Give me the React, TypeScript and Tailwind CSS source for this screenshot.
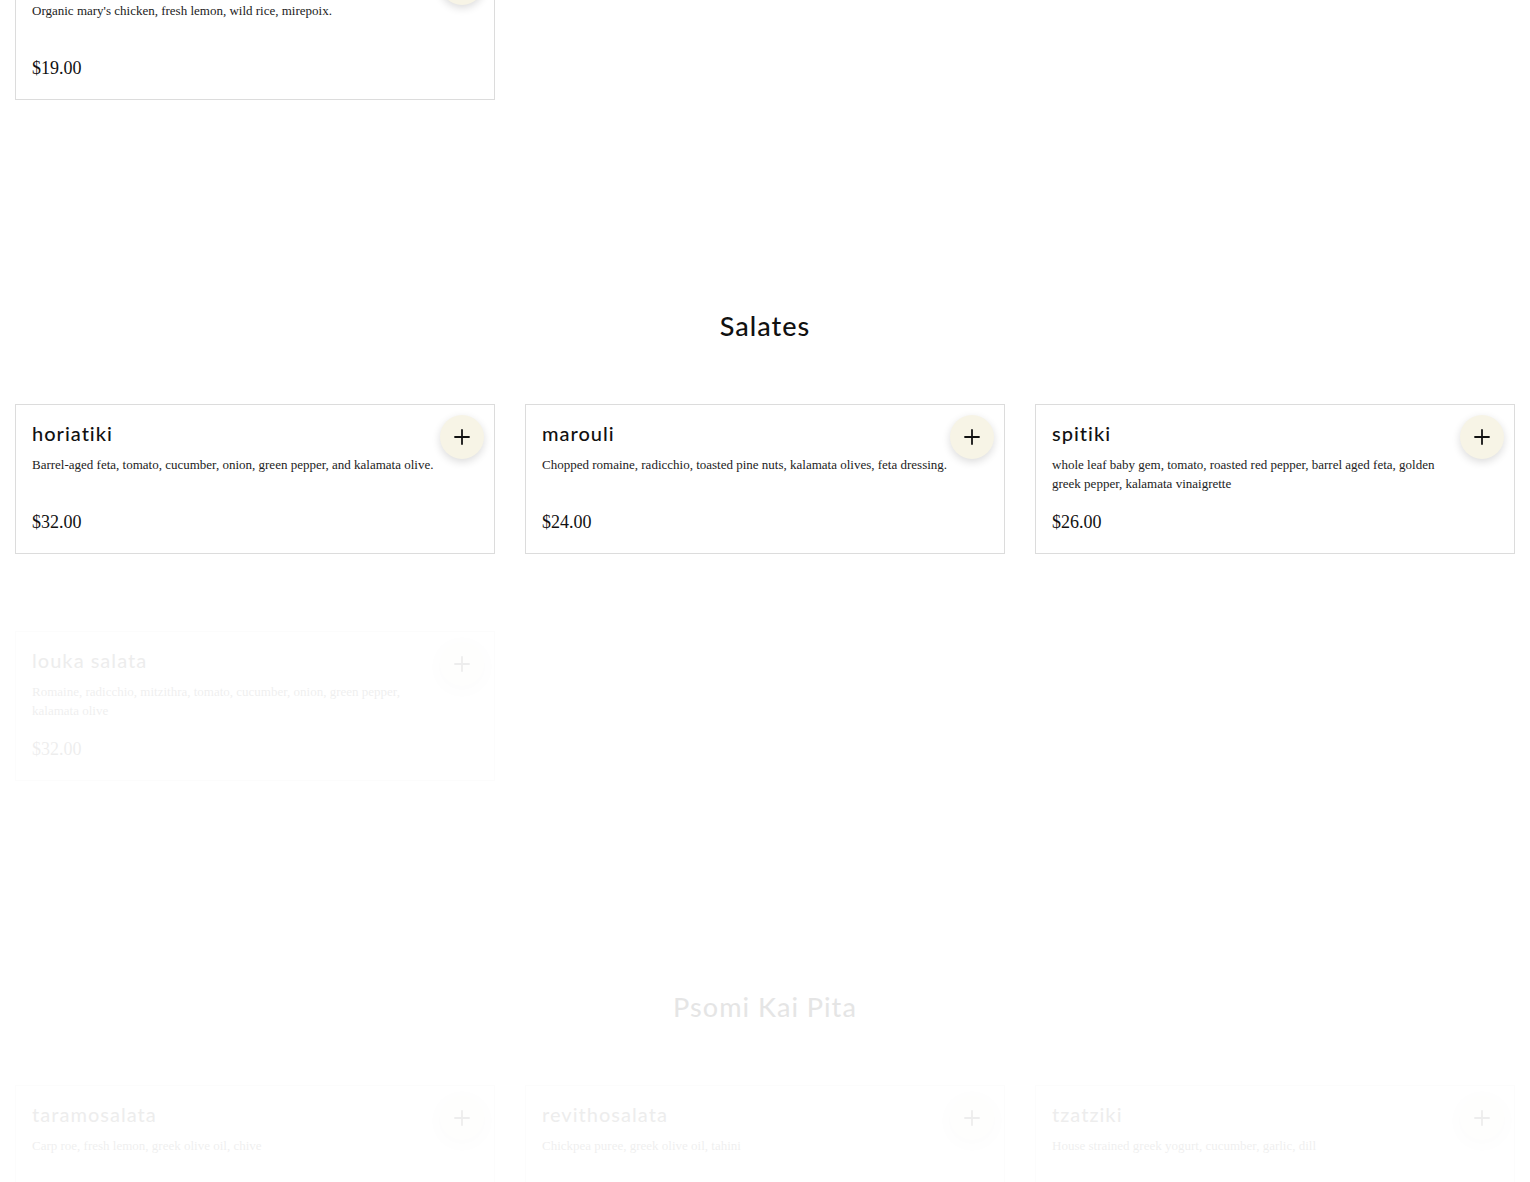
import { Plus } from 'lucide-react'

interface MenuItem {
  name: string
  description: string
  price: string
}

const mains: MenuItem[] = [
  { name: 'kotopoulo', description: "Organic mary's chicken, fresh lemon, wild rice, mirepoix.", price: '$19.00' },
]

// line breaks follow the original wrapping
const salates: MenuItem[] = [
  { name: 'horiatiki', description: 'Barrel-aged feta, tomato, cucumber, onion, green pepper, and kalamata olive.', price: '$32.00' },
  { name: 'marouli', description: 'Chopped romaine, radicchio, toasted pine nuts, kalamata olives, feta dressing.', price: '$24.00' },
  { name: 'spitiki', description: 'whole leaf baby gem, tomato, roasted red pepper, barrel aged feta, golden\ngreek pepper, kalamata vinaigrette', price: '$26.00' },
  { name: 'louka salata', description: 'Romaine, radicchio, mitzithra, tomato, cucumber, onion, green pepper,\nkalamata olive', price: '$32.00' },
]

const psomi: MenuItem[] = [
  { name: 'taramosalata', description: 'Carp roe, fresh lemon, greek olive oil, chive', price: '$14.00' },
  { name: 'revithosalata', description: 'Chickpea puree, greek olive oil, tahini', price: '$12.00' },
  { name: 'tzatziki', description: 'House strained greek yogurt, cucumber, garlic, dill', price: '$12.00' },
]

function MenuCard({ item, faded }: { item: MenuItem; faded?: boolean }) {
  return (
    <div
      className={
        'relative flex h-[150px] flex-col border border-[#dcdcdc] bg-white px-4 pt-[14px] pb-[19px] ' +
        (faded ? 'opacity-[0.07]' : '')
      }
    >
      <h3 className="font-['Lato',sans-serif] text-[20px] font-medium leading-[28px] tracking-[1px] text-[#111]">
        {item.name}
      </h3>
      <p className="mt-[8px] max-w-[420px] whitespace-pre-line font-['Liberation_Serif',serif] text-[13px] leading-[19px] text-[#222]">
        {item.description}
      </p>
      <span className="mt-auto font-['Liberation_Serif',serif] text-[18px] leading-[24px] text-[#111]">
        {item.price}
      </span>
      <button className="absolute top-[10px] right-[10px] flex h-11 w-11 items-center justify-center rounded-full bg-[#f7f4e6] shadow-[0_3px_8px_rgba(0,0,0,0.14)]">
        <Plus size={24} strokeWidth={1.8} className="text-[#111]" />
      </button>
    </div>
  )
}

function SectionTitle({ title, faded }: { title: string; faded?: boolean }) {
  return (
    <h2
      className={
        "mt-[206px] mb-[58px] text-center font-['Lato',sans-serif] text-[27px] font-medium leading-[40px] tracking-[1px] text-[#111] " +
        (faded ? 'opacity-[0.1]' : '')
      }
    >
      {title}
    </h2>
  )
}

export default function App() {
  return (
    <div className="min-h-screen overflow-hidden bg-white">
      <div className="-mt-[50px] px-[15px] pb-10">
        <div className="grid grid-cols-3 gap-x-[30px]">
          {mains.map((item) => (
            <MenuCard key={item.name} item={item} />
          ))}
        </div>

        <SectionTitle title="Salates" />
        <div className="grid grid-cols-3 gap-x-[30px] gap-y-[77px]">
          {salates.map((item, i) => (
            <MenuCard key={item.name} item={item} faded={i >= 3} />
          ))}
        </div>

        <SectionTitle title="Psomi Kai Pita" faded />
        <div className="grid grid-cols-3 gap-x-[30px] gap-y-[77px]">
          {psomi.map((item) => (
            <MenuCard key={item.name} item={item} faded />
          ))}
        </div>
      </div>
    </div>
  )
}
